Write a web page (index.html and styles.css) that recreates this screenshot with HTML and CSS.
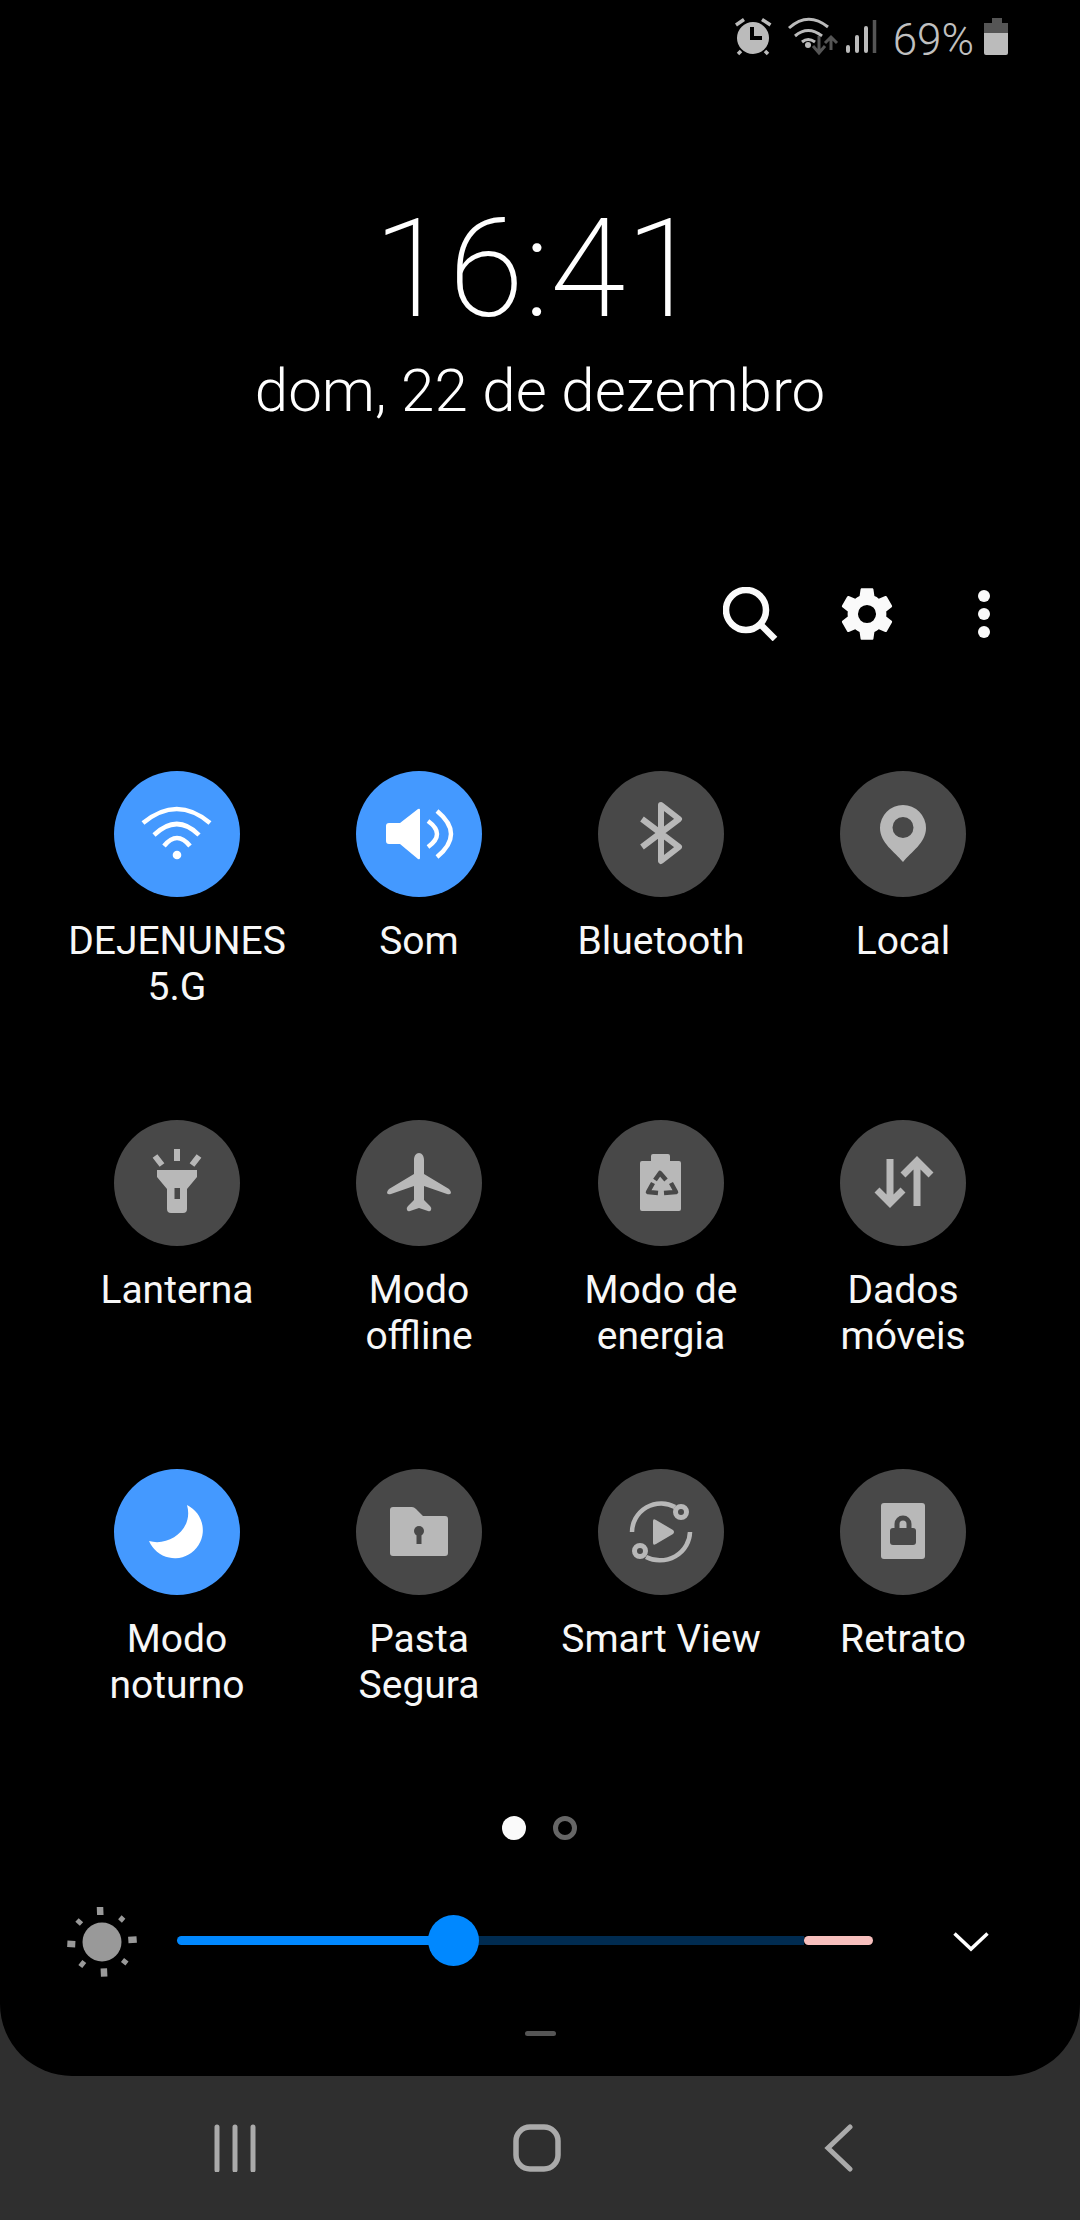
FILE: index.html
```html
<!DOCTYPE html>
<html lang="pt">
<head>
    <meta charset="UTF-8">
    <meta name="viewport" content="width=device-width, initial-scale=1.0">
    <title>Painel rapido</title>
    <link rel="stylesheet" href="styles.css">
</head>
<body>
    <div class="panel">
        <div class="status-bar">
            <svg class="st-alarm" width="40" height="40" viewBox="0 0 40 40">
                <circle cx="20" cy="21" r="16" fill="#bbb"/>
                <path d="M3 8 11 2.500M29 2.500 37.500 8M8 34 5 37M32 34 35 37" stroke="#bbb" stroke-width="3.500" fill="none"/>
                <path d="M19 10V21H29" stroke="#000" stroke-width="4" fill="none"/>
            </svg>
            <svg class="st-wifi" width="56" height="40" viewBox="0 0 56 40">
                <path d="M2 12Q21-5 41 11M8 20Q21 9 35 20M15 26Q21 21 28 26" stroke="#bbb" stroke-width="3" fill="none"/>
                <circle cx="21" cy="29" r="3" fill="#bbb"/>
                <path d="M32 20V36M26 30 32 37 38 30" stroke="#555" stroke-width="3" fill="none"/>
                <path d="M44 34V22M38 27 44 21 50 27" stroke="#555" stroke-width="3" fill="none"/>
            </svg>
            <svg class="st-signal" width="32" height="33" viewBox="0 0 32 33">
                <path d="M3 31V27M12 31V17M21 31V8" stroke="#bbb" stroke-width="4" stroke-linecap="round"/>
                <path d="M29.500 33V0" stroke="#555" stroke-width="3.500"/>
            </svg>
            <span class="st-percent">69%</span>
            <svg class="st-battery" width="24" height="37" viewBox="0 0 24 37">
                <path d="M8 0H18V5H24V15H0V5H8Z" fill="#555"/>
                <path d="M0 15H24V35Q24 37 22 37H2Q0 37 0 35Z" fill="#bbb"/>
            </svg>
        </div>

        <div class="clock">
            <div class="clock-time">16:41</div>
            <div class="clock-date">dom, 22 de dezembro</div>
        </div>

        <div class="toolbar">
            <svg width="56" height="54" viewBox="0 0 56 54">
                <circle cx="23" cy="23" r="20" stroke="#fafafa" stroke-width="6.500" fill="none"/>
                <path d="M37 37 52 52" stroke="#fafafa" stroke-width="6.500" fill="none"/>
            </svg>
            <svg class="tb-gear" width="62" height="62" viewBox="0 0 24 24">
                <path fill="#fafafa" fill-rule="evenodd" d="M19.430 12.980c.04-.32.070-.64.070-.98s-.03-.66-.07-.98l2.110-1.650c.19-.15.240-.42.120-.64l-2-3.460c-.12-.22-.39-.3-.61-.22l-2.490 1c-.52-.4-1.080-.73-1.690-.98l-.38-2.650C14.460 2.180 14.250 2 14 2h-4c-.25 0-.46.180-.49.420l-.38 2.650c-.61.250-1.170.590-1.690.980l-2.490-1c-.23-.090-.49 0-.61.220l-2 3.460c-.13.220-.07.490.12.640l2.110 1.650c-.04.320-.07.650-.07.980s.03.660.07.980l-2.110 1.650c-.19.150-.24.420-.12.640l2 3.460c.12.220.39.300.61.220l2.490-1c.52.400 1.080.730 1.690.980l.38 2.650c.03.240.24.420.49.420h4c.25 0 .46-.180.49-.420l.38-2.650c.61-.250 1.170-.590 1.690-.980l2.490 1c.23.090.49 0 .61-.220l2-3.460c.12-.220.07-.490-.12-.640l-2.110-1.650zM12 15.500a3.500 3.500 0 1 1 0-7 3.500 3.500 0 0 1 0 7z"/>
            </svg>
            <div class="tb-more"><i></i><i></i><i></i></div>
        </div>

        <div class="tiles">
            <div class="tile">
                <div class="tile-icon on">
                    <svg viewBox="0 0 126 126">
                        <path d="M29 52Q63 24 96 52M40 64Q63 42 85 64M50 75Q63 59 76 75" stroke="#fff" stroke-width="4.500" fill="none"/>
                        <circle cx="63" cy="84" r="4.300" fill="#fff"/>
                    </svg>
                </div>
                <div class="tile-label">DEJENUNES<br>5.G</div>
            </div>
            <div class="tile">
                <div class="tile-icon on">
                    <svg viewBox="0 0 126 126">
                        <path fill="#fff" d="M33 52H44L62 38Q64 37 64 39V87Q64 89 62 88L44 73H33Q30 73 30 70V55Q30 52 33 52Z"/>
                        <path d="M72 50Q90 63 72 76M81 40Q109 63 81 86" stroke="#fff" stroke-width="4.500" fill="none"/>
                    </svg>
                </div>
                <div class="tile-label">Som</div>
            </div>
            <div class="tile">
                <div class="tile-icon">
                    <svg viewBox="0 0 126 126">
                        <path d="M44 48 81 76 63 90V34L81 48 44 76" stroke="#b8b8b8" stroke-width="6" stroke-linejoin="round" fill="none"/>
                    </svg>
                </div>
                <div class="tile-label">Bluetooth</div>
            </div>
            <div class="tile">
                <div class="tile-icon">
                    <svg viewBox="0 0 126 126">
                        <path fill="#b8b8b8" fill-rule="evenodd" d="M63 91C55 81 40 72 40 57A23 23 0 0 1 86 57C86 72 71 81 63 91ZM63 46A10.500 10.500 0 1 0 63 67 10.500 10.500 0 1 0 63 46Z"/>
                    </svg>
                </div>
                <div class="tile-label">Local</div>
            </div>

            <div class="tile">
                <div class="tile-icon">
                    <svg viewBox="0 0 126 126">
                        <path fill="#b8b8b8" fill-rule="evenodd" d="M43 50H83V57L73 69V89Q73 93 69 93H57Q53 93 53 89V69L43 57ZM60.500 68V79H66V68Z"/>
                        <path d="M63 29V41M41 36 48 45M85 36 78 45" stroke="#b8b8b8" stroke-width="6" fill="none"/>
                    </svg>
                </div>
                <div class="tile-label">Lanterna</div>
            </div>
            <div class="tile">
                <div class="tile-icon">
                    <svg viewBox="0 0 126 126">
                        <path fill="#b8b8b8" d="M63 33C60 33 58 36 58 40V54L33 69Q31 71 31 73 32 75 35 74L58 66V80L52 86Q50 88 51 90 52 92 54 91L63 88 72 91Q74 92 75 90 76 88 74 86L68 80V66L91 74Q94 75 95 73 95 71 93 69L68 54V40C68 36 66 33 63 33Z"/>
                    </svg>
                </div>
                <div class="tile-label">Modo<br>offline</div>
            </div>
            <div class="tile">
                <div class="tile-icon">
                    <svg viewBox="0 0 126 126">
                        <path fill="#b8b8b8" d="M53 41V36Q53 34 55 34H70Q72 34 72 36V41H81Q83 41 83 43V89Q83 91 81 91H44Q42 91 42 89V43Q42 41 44 41Z"/>
                        <path d="M57 60 62 53 68 60M55 63 50 72 60 73M73 63 78 72 66 73" stroke="#484848" stroke-width="4.500" stroke-linejoin="round" fill="none"/>
                    </svg>
                </div>
                <div class="tile-label">Modo de<br>energia</div>
            </div>
            <div class="tile">
                <div class="tile-icon">
                    <svg viewBox="0 0 126 126">
                        <path d="M50 39V82M37 70 50 83 63 70M77 86V42M63 55 77 41 91 55" stroke="#b8b8b8" stroke-width="7" fill="none"/>
                    </svg>
                </div>
                <div class="tile-label">Dados<br>móveis</div>
            </div>

            <div class="tile">
                <div class="tile-icon on">
                    <svg viewBox="0 0 126 126">
                        <path fill="#fff" d="M73 36A28 28 0 1 1 35 72C55 78 80 60 73 36Z"/>
                    </svg>
                </div>
                <div class="tile-label">Modo<br>noturno</div>
            </div>
            <div class="tile">
                <div class="tile-icon">
                    <svg viewBox="0 0 126 126">
                        <path fill="#b8b8b8" d="M37 38H56Q58 38 60 40L67 47H89Q92 47 92 50V84Q92 87 89 87H37Q34 87 34 84V41Q34 38 37 38Z"/>
                        <circle cx="63" cy="62" r="5" fill="#484848"/>
                        <path fill="#484848" d="M60.500 64H65.500V75H60.500Z"/>
                    </svg>
                </div>
                <div class="tile-label">Pasta<br>Segura</div>
            </div>
            <div class="tile">
                <div class="tile-icon">
                    <svg viewBox="0 0 126 126">
                        <path fill="#b8b8b8" d="M55 52Q55 49 58 51L75 61Q77 63 75 65L58 75Q55 77 55 74Z"/>
                        <path d="M34 63A29 29 0 0 1 77 38M92 63A30 29 0 0 1 48 88" stroke="#b8b8b8" stroke-width="4.500" fill="none"/>
                        <circle cx="83" cy="43" r="5.500" stroke="#b8b8b8" stroke-width="5" fill="#484848"/>
                        <circle cx="42" cy="82" r="5.500" stroke="#b8b8b8" stroke-width="5" fill="#484848"/>
                    </svg>
                </div>
                <div class="tile-label">Smart View</div>
            </div>
            <div class="tile">
                <div class="tile-icon">
                    <svg viewBox="0 0 126 126">
                        <rect x="41" y="34" width="44" height="56" rx="3" fill="#b8b8b8"/>
                        <rect x="50" y="59" width="26" height="17" rx="3" fill="#484848"/>
                        <path d="M57 60V55A6 6 0 0 1 69 55V60" stroke="#484848" stroke-width="5" fill="none"/>
                    </svg>
                </div>
                <div class="tile-label">Retrato</div>
            </div>
        </div>

        <div class="pager">
            <span class="pager-dot active"></span>
            <span class="pager-dot"></span>
        </div>

        <div class="brightness">
            <svg class="sun" width="80" height="80" viewBox="0 0 80 80">
                <circle cx="40" cy="41" r="19.500" fill="#999"/>
                <path d="M38 6 38.300 14M66.300 39 74.700 38.400M5.300 42.800 13.300 43.200M41.800 67.300 42.200 75.700" stroke="#999" stroke-width="6.500" fill="none"/>
                <path d="M58 20 61.500 16M15 19 19.500 23M18.300 65.500 22.300 60.500M60.500 59 65 62.500" stroke="#999" stroke-width="5" fill="none"/>
            </svg>
            <div class="slider">
                <div class="slider-fill"></div>
                <div class="slider-rest"></div>
                <div class="slider-warm"></div>
                <div class="slider-thumb"></div>
            </div>
            <svg class="chevron" width="36" height="20" viewBox="0 0 36 20">
                <path d="M1.500 1.500 18 17 34.500 1.500" stroke="#fff" stroke-width="3.500" fill="none"/>
            </svg>
        </div>

        <div class="handle"></div>
    </div>

    <div class="navbar">
        <div class="nav-item">
            <svg width="42" height="48" viewBox="0 0 42 48">
                <path d="M3 3V46M21 3V46M39 3V46" stroke="#aaa" stroke-width="5" stroke-linecap="round"/>
            </svg>
        </div>
        <div class="nav-item">
            <svg width="48" height="48" viewBox="0 0 48 48">
                <rect x="3" y="3" width="42" height="42" rx="14" stroke="#aaa" stroke-width="5.500" fill="none"/>
            </svg>
        </div>
        <div class="nav-item">
            <svg width="30" height="48" viewBox="0 0 30 48">
                <path d="M26 3 4 24 26 45" stroke="#aaa" stroke-width="5" stroke-linecap="round" fill="none"/>
            </svg>
        </div>
    </div>
</body>
</html>
```

FILE: styles.css
```css
* {
    box-sizing: border-box;
}
html, body {
    margin: 0;
    height: 2220px;
}
body {
    font-family: Roboto, "Liberation Sans", sans-serif;
    background: #2f2f2f;
    overflow: hidden;
}
svg {
    display: block;
}
.panel {
    height: 2076px;
    background: #000;
    border-radius: 0 0 72px 72px;
}

/* status bar */
.status-bar {
    height: 72px;
    padding: 17px 72px 0 0;
    display: flex;
    justify-content: flex-end;
    align-items: flex-start;
}
.st-wifi {
    margin-left: 14px;
    margin-top: -1px;
}
.st-signal {
    margin-left: 2px;
    margin-top: 3px;
}
.st-percent {
    margin-left: 16px;
    margin-top: -2px;
    font-size: 44px;
    font-weight: 300;
    line-height: 50px;
    color: #c0c0c0;
}
.st-battery {
    margin-left: 10px;
    margin-top: 1px;
}

/* clock */
.clock {
    height: 360px;
    padding-top: 132px;
    text-align: center;
    color: #fff;
    font-weight: 300;
}
.clock-time {
    font-size: 137px;
    line-height: 130px;
    font-weight: 200;
    padding-right: 6px;
}
.clock-date {
    font-size: 60px;
    line-height: 70px;
    margin-top: 22px;
}

/* search, settings, more */
.toolbar {
    height: 339px;
    padding: 155px 90px 0 0;
    display: flex;
    justify-content: flex-end;
    align-items: flex-start;
}
.tb-gear {
    margin-left: 57px;
    margin-top: -4px;
}
.tb-more {
    margin-left: 80px;
    width: 12px;
    display: flex;
    flex-direction: column;
    gap: 6px;
    margin-top: 3px;
}
.tb-more i {
    width: 12px;
    height: 12px;
    border-radius: 50%;
    background: #fafafa;
}

/* quick setting tiles */
.tiles {
    padding: 0 56px;
    display: grid;
    grid-template-columns: repeat(4, 242px);
    grid-auto-rows: 349px;
}
.tile {
    display: flex;
    flex-direction: column;
    align-items: center;
}
.tile-icon {
    width: 126px;
    height: 126px;
    border-radius: 50%;
    background: #484848;
}
.tile-icon.on {
    background: #4499ff;
}
.tile-label {
    margin-top: 21px;
    font-size: 39px;
    line-height: 46px;
    color: #f7f7f7;
    text-align: center;
    white-space: nowrap;
}

.pager {
    margin-top: -2px;
    padding-left: 502px;
    height: 85px;
    display: flex;
    gap: 27px;
}
.pager-dot {
    width: 24px;
    height: 24px;
    border-radius: 50%;
    border: 5px solid #666;
}
.pager-dot.active {
    background: #fafafa;
    border: none;
}

/* brightness */
.brightness {
    height: 80px;
    padding-left: 62px;
    display: flex;
    align-items: center;
}
.slider {
    position: relative;
    margin-left: 35px;
    margin-top: -1px;
    width: 696px;
    height: 9px;
    display: flex;
}
.slider-fill {
    width: 276px;
    background: #0088ff;
    border-radius: 5px 0 0 5px;
}
.slider-rest {
    flex: 1;
    background: #002b50;
}
.slider-warm {
    width: 69px;
    background: #f7bfbd;
    border-radius: 5px;
}
.slider-thumb {
    position: absolute;
    left: 251px;
    top: -21px;
    width: 51px;
    height: 51px;
    border-radius: 50%;
    background: #0088ff;
}
.chevron {
    margin-left: 80px;
    margin-top: 2px;
}

.handle {
    width: 31px;
    height: 5px;
    margin: 50px auto 0;
    border-radius: 3px;
    background: #555;
}

/* navigation bar */
.navbar {
    height: 144px;
    padding: 0 84px;
    display: grid;
    grid-template-columns: repeat(3, 302px);
}
.nav-item {
    display: flex;
    justify-content: center;
    align-items: center;
}
```
